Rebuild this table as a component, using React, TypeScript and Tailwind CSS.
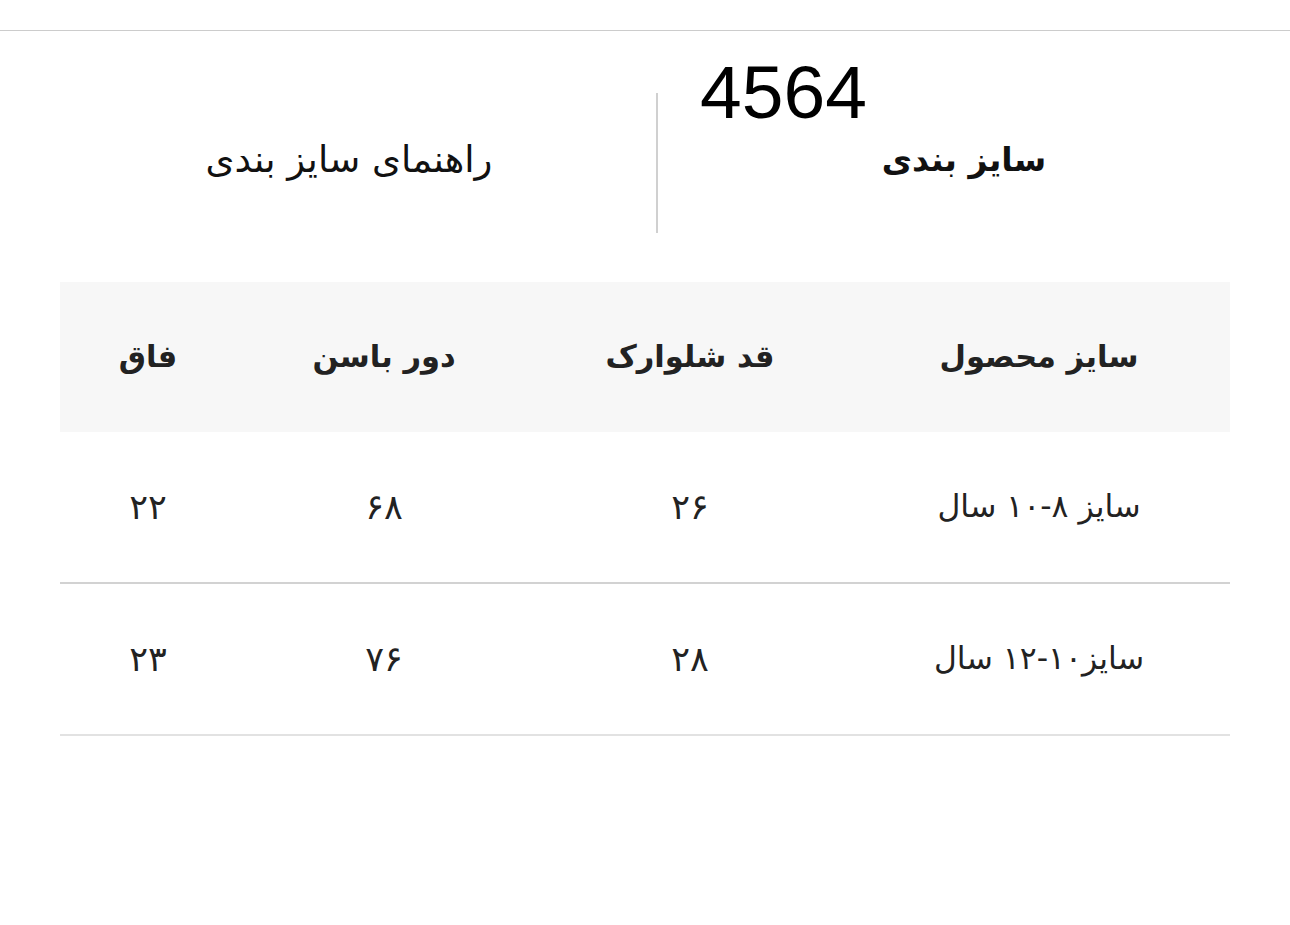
const font = { fontFamily: '"DejaVu Sans", "Noto Sans", sans-serif' };

const cols = 'grid grid-cols-[382px_316px_296px_176px]';

const header = ['سایز محصول', 'قد شلوارک', 'دور باسن', 'فاق'];

const rows = [
  { cells: ['سایز ۸-۱۰ سال', '۲۶', '۶۸', '۲۲'], border: 'border-[#d2d2d2]' },
  { cells: ['سایز۱۰-۱۲ سال', '۲۸', '۷۶', '۲۳'], border: 'border-[#e2e2e2]' },
];

export default function App() {
  return (
    <div dir="rtl" className="min-h-[925px] bg-white text-[#222222]" style={font}>
      {/* top bar */}
      <div className="h-[31px] border-b border-[#cccccc]" />

      <div className="px-[60px]">
        {/* title section */}
        <div className="flex items-start pt-[24px]">
          <div className="flex-1 flex flex-col">
            <div
              dir="ltr"
              className="pl-[42px] text-left text-[75px] leading-[75px] text-black"
              style={{ fontFamily: '"Liberation Sans", Arial, sans-serif' }}
            >
              4564
            </div>
            <div className="mt-[10px] pl-[40px] text-center text-[33px] leading-[40px] font-bold text-[#111111]">
              سایز بندی
            </div>
          </div>
          <div className="mt-[38px] h-[140px] w-[2px] bg-[#d0d0d0]" />
          <div className="w-[596px] pr-[18px] mt-[85px] text-center text-[37px] leading-[40px] text-[#111111]">
            راهنمای سایز بندی
          </div>
        </div>

        {/* size table */}
        <div className="mt-[49px]">
          <div className={`${cols} h-[150px] items-center bg-[#f7f7f7]`}>
            {header.map((h) => (
              <div key={h} className="text-center text-[30.5px] font-bold">
                {h}
              </div>
            ))}
          </div>
          {rows.map((r, i) => (
            <div key={i} className={`${cols} h-[152px] items-center border-b-2 ${r.border}`}>
              {r.cells.map((c, j) =>
                j === 0 ? (
                  <div key={j} className="text-center text-[31.5px]">
                    {c}
                  </div>
                ) : (
                  <div key={j} className="text-center text-[35px] leading-[40px]">
                    {c}
                  </div>
                ),
              )}
            </div>
          ))}
        </div>
      </div>
    </div>
  );
}
